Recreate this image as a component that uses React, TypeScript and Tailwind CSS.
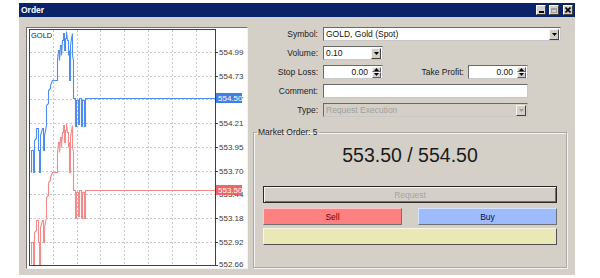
import React from "react";

const BLUE: [number, number][] = [
  [31, 172], [31, 150], [33, 150], [33, 172], [34, 172], [34, 140], [36, 138], [36, 128], [38, 128], [38, 150], [39, 150], [39, 172], [40, 172], [40, 135], [42, 128], [43, 128], [43, 150], [44, 150], [44, 135], [46, 125], [46, 105], [48, 103], [48, 90], [50, 88], [50, 85], [52, 80], [57, 80], [57, 60], [58, 50], [59, 50], [59, 60], [60, 45], [61, 45], [61, 55], [62, 40], [63, 40], [63, 33], [64, 33], [64, 50], [65, 50], [65, 38], [66, 38], [66, 31], [67, 40], [68, 40], [68, 55], [69, 50], [69, 80], [70, 80], [70, 45], [71, 38], [72, 33], [72, 55], [73, 60], [73, 98], [75, 98], [75, 126], [76, 126], [76, 100], [78, 100], [78, 124], [79, 124], [79, 98], [81, 98], [81, 126], [82, 126], [82, 100], [84, 100], [84, 126], [85, 126], [85, 98], [215, 98],
];

const toPath = (pts: [number, number][], dy: number) =>
  pts.map((p, i) => `${i === 0 ? "M" : "L"}${p[0] + 0.5} ${p[1] + dy + 0.5}`).join(" ");

const LEVELS = [
  { y: 52, t: "554.99" },
  { y: 75.7, t: "554.73" },
  { y: 99.4, t: "554.47" },
  { y: 123.1, t: "554.21" },
  { y: 146.8, t: "553.95" },
  { y: 170.5, t: "553.70" },
  { y: 194.2, t: "553.44" },
  { y: 217.9, t: "553.18" },
  { y: 241.6, t: "552.92" },
  { y: 265, t: "552.66" },
];
const VX = [53, 77, 100, 124, 148, 172, 196];

function Chart() {
  return (
    <div className="w-[222px] h-[242px] bg-white border border-t-[#707070] border-l-[#707070] border-b-[#f4f4f4] border-r-[#f4f4f4] shrink-0">
      <svg width="220" height="240" viewBox="27 28 220 240" className="block">
        <defs>
          <clipPath id="plot">
            <rect x="29" y="30" width="186" height="235" />
          </clipPath>
        </defs>
        {LEVELS.map((l) => (
          <line key={l.t} x1="30" x2="215" y1={Math.round(l.y) + 0.5} y2={Math.round(l.y) + 0.5} stroke="#c8c8c8" strokeDasharray="2 2" />
        ))}
        {VX.map((x) => (
          <line key={x} x1={x + 0.5} x2={x + 0.5} y1="30" y2="265" stroke="#c8c8c8" strokeDasharray="2 2" />
        ))}
        <g clipPath="url(#plot)">
          <path d={toPath(BLUE, 0)} fill="none" stroke="#4f8cf0" strokeWidth="1.1" />
          <path d={toPath(BLUE, 92)} fill="none" stroke="#f28c8c" strokeWidth="1.1" />
        </g>
        <rect x="29.5" y="29.5" width="186" height="236" fill="none" stroke="#404040" strokeWidth="1" />
        {LEVELS.map((l) => (
          <g key={"t" + l.t}>
            <line x1="215" x2="218" y1={Math.round(l.y) + 0.5} y2={Math.round(l.y) + 0.5} stroke="#404040" />
            <text x="219" y={Math.min(l.y + 3, 266.5)} fontSize="8" fill="#3a3a3a" fontFamily="Liberation Sans, Arial, sans-serif">
              {l.t}
            </text>
          </g>
        ))}
        <rect x="216" y="93" width="26" height="10" fill="#3f7fe6" />
        <text x="218" y="101" fontSize="8" fill="#fff" fontFamily="Liberation Sans, Arial, sans-serif">554.50</text>
        <rect x="216" y="185" width="26" height="10" fill="#f06464" />
        <text x="218" y="193" fontSize="8" fill="#fff" fontFamily="Liberation Sans, Arial, sans-serif">553.50</text>
        <text x="31" y="38" fontSize="7.5" fill="#222" fontFamily="Liberation Sans, Arial, sans-serif">GOLD</text>
      </svg>
    </div>
  );
}

function DropBtn({ disabled }: { disabled?: boolean }) {
  return (
    <div className="w-[10px] h-[11px] bg-[#d4d0c8] border border-t-[#f4f4f4] border-l-[#f4f4f4] border-b-[#404040] border-r-[#404040] flex items-center justify-center shrink-0">
      <svg width="5" height="3" className="block">
        <path d="M0 0H5L2.5 3Z" fill={disabled ? "#9a9a9a" : "#000"} />
      </svg>
    </div>
  );
}

function Spin() {
  return (
    <div className="flex flex-col w-[9px] h-[11px] shrink-0">
      <div className="flex-1 bg-[#d4d0c8] border border-t-[#f4f4f4] border-l-[#f4f4f4] border-b-[#606060] border-r-[#606060] flex items-center justify-center">
        <svg width="5" height="3" className="block">
          <path d="M2.5 0L5 3H0Z" fill="#000" />
        </svg>
      </div>
      <div className="flex-1 bg-[#d4d0c8] border border-t-[#f4f4f4] border-l-[#f4f4f4] border-b-[#606060] border-r-[#606060] flex items-center justify-center">
        <svg width="5" height="3" className="block">
          <path d="M0 0H5L2.5 3Z" fill="#000" />
        </svg>
      </div>
    </div>
  );
}

const field =
  "h-[14px] border border-t-[#6a6a6a] border-l-[#6a6a6a] border-b-[#c8c8c8] border-r-[#c8c8c8] flex items-center";

function Label({ children }: { children: React.ReactNode }) {
  return <div className="w-[65px] text-right text-[#222] shrink-0">{children}</div>;
}

export default function App() {
  return (
    <div className="w-[600px] h-[278px] bg-white font-['Liberation_Sans',Arial,sans-serif] text-[8.5px] leading-[10px] overflow-hidden">
      <div className="ml-[19px] mt-[3px] w-[556px] h-[272px] bg-[#d4d0c8] flex flex-col">
        <div className="h-[14px] bg-[#0a246a] flex items-center pl-[2px] pr-[2px]">
          <span className="text-white font-bold text-[8.5px]">Order</span>
          <div className="ml-auto flex items-center">
            <div className="w-[10px] h-[10px] bg-[#d4d0c8] border border-t-white border-l-white border-b-[#404040] border-r-[#404040] flex items-end justify-center pb-[1px]">
              <div className="w-[5px] h-[2px] bg-black" />
            </div>
            <div className="ml-[3px] w-[10px] h-[10px] bg-[#d4d0c8] border border-t-white border-l-white border-b-[#404040] border-r-[#404040] flex items-center justify-center">
              <div className="w-[6px] h-[5px] border border-t-2 border-[#a0a0a0]" />
            </div>
            <div className="ml-[4px] w-[10px] h-[10px] bg-[#d4d0c8] border border-t-white border-l-white border-b-[#404040] border-r-[#404040] flex items-center justify-center">
              <svg width="6" height="6" className="block">
                <path d="M0.5 0.5L5.5 5.5M5.5 0.5L0.5 5.5" stroke="#000" strokeWidth="1.6" />
              </svg>
            </div>
          </div>
        </div>
        <div className="flex pl-[7px] pt-[10px]">
          <Chart />
          <div className="ml-[5px] w-[314px] flex flex-col">
            <div className="flex flex-col gap-[5px]">
              <div className="flex items-center h-[14px]">
                <Label>Symbol:</Label>
                <div className={`${field} ml-[5px] w-[238px] bg-white pl-[2px] pr-[1px]`}>
                  <span className="text-[#111]">GOLD, Gold (Spot)</span>
                  <div className="ml-auto"><DropBtn /></div>
                </div>
              </div>
              <div className="flex items-center h-[14px]">
                <Label>Volume:</Label>
                <div className={`${field} ml-[5px] w-[60px] bg-white pl-[2px] pr-[1px]`}>
                  <span className="text-[#111]">0.10</span>
                  <div className="ml-auto"><DropBtn /></div>
                </div>
              </div>
              <div className="flex items-center h-[14px]">
                <Label>Stop Loss:</Label>
                <div className={`${field} ml-[5px] w-[60px] bg-white pr-[1px]`}>
                  <span className="ml-auto mr-[4px] text-[#111]">0.00</span>
                  <Spin />
                </div>
                <div className="w-[81px] text-right text-[#222]">Take Profit:</div>
                <div className={`${field} ml-[4px] w-[60px] bg-white pr-[1px]`}>
                  <span className="ml-auto mr-[4px] text-[#111]">0.00</span>
                  <Spin />
                </div>
              </div>
              <div className="flex items-center h-[14px]">
                <Label>Comment:</Label>
                <div className={`${field} ml-[5px] w-[205px] bg-white`} />
              </div>
              <div className="flex items-center h-[14px]">
                <Label>Type:</Label>
                <div className={`${field} ml-[5px] w-[205px] bg-[#d4d0c8] pl-[2px] pr-[1px]`}>
                  <span className="text-[#a0a0a0]">Request Execution</span>
                  <div className="ml-auto"><DropBtn disabled /></div>
                </div>
              </div>
            </div>
            <fieldset className="mt-[10px] h-[141px] border border-[#a8a8a8] shadow-[inset_1px_1px_0_#f4f4f4,1px_1px_0_#f4f4f4] p-0 m-0">
              <legend className="ml-[3px] px-[1px] text-[#222] leading-[10px]">Market Order: 5</legend>
              <div className="flex flex-col px-[9px]">
                <div className="mt-[6px] h-[24px] flex items-center justify-center text-[19.5px] text-[#1a1a1a]">
                  553.50 / 554.50
                </div>
                <div className="mt-[19px] h-[17px] border border-[#2a2a2a] bg-[#d4d0c8] shadow-[inset_1px_1px_0_#f4f4f4,inset_-1px_-1px_0_#707070] flex items-center justify-center text-[#a4a4a4]">
                  Request
                </div>
                <div className="mt-[5px] flex gap-[16px]">
                  <div className="w-[139px] h-[17px] bg-[#ff8080] border border-t-[#ffc4c4] border-l-[#ffc4c4] border-b-[#707070] border-r-[#707070] flex items-center justify-center text-[#6a0000]">
                    Sell
                  </div>
                  <div className="flex-1 h-[17px] bg-[#9ebcfc] border border-t-[#d8e4ff] border-l-[#d8e4ff] border-b-[#707070] border-r-[#707070] flex items-center justify-center text-[#001050]">
                    Buy
                  </div>
                </div>
                <div className="mt-[3px] h-[17px] bg-[#e9e8b6] border border-t-[#f8f8e0] border-l-[#f8f8e0] border-b-[#505050] border-r-[#505050]" />
              </div>
            </fieldset>
          </div>
        </div>
      </div>
    </div>
  );
}
